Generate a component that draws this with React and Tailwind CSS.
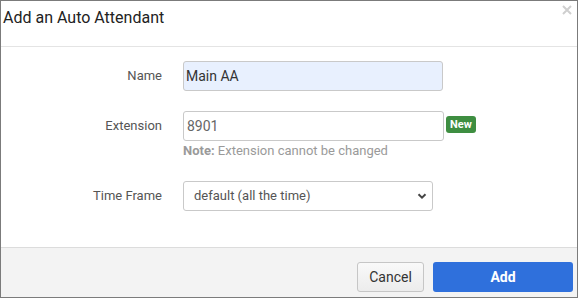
import React from "react";

const Label = ({ children }) => (
  <div className="text-right text-[13px] text-[#555] leading-[30px]">{children}</div>
);

const App = () => {
  return (
    <div
      className="w-[578px] h-[298px] border border-[#7b7b7b] bg-white flex flex-col overflow-hidden"
      style={{ fontFamily: "Roboto, 'Liberation Sans', sans-serif" }}
    >
      {/* header */}
      <div className="h-[46px] border-b border-[#e4e4e4] flex items-start justify-between pl-[2px] pr-[5px] pt-[7px]">
        <h3 className="text-[16px] leading-[20px] text-[#222]">Add an Auto Attendant</h3>
        <svg width="10" height="10" viewBox="0 0 10 10" className="mt-[-3px]">
          <path d="M1 1 L9 9 M9 1 L1 9" stroke="#cfcfcf" strokeWidth="2" />
        </svg>
      </div>

      {/* body */}
      <div className="flex-1 pt-[14px]">
        <div className="grid grid-cols-[161px_1fr] gap-x-[21px] items-start">
          <Label>Name</Label>
          <div className="w-[260px] h-[30px] border border-[#c9c9c9] rounded-[3px] bg-[#e8f0fe] text-[14px] text-[#333] leading-[28px] pl-[2px]">
            Main AA
          </div>

          <div className="mt-[20px]">
            <Label>Extension</Label>
          </div>
          <div className="mt-[20px]">
            <div className="flex items-center gap-[2px]">
              <div className="w-[261px] h-[30px] border border-[#c9c9c9] rounded-[3px] bg-white text-[14px] text-[#666] leading-[28px] pl-[3px]">
                8901
              </div>
              <span className="bg-[#3e8e41] text-white text-[11px] font-bold leading-[17px] px-[4px] rounded-[3px] -mt-[3px]">
                New
              </span>
            </div>
            <p className="mt-[2px] text-[13px] leading-[16px] text-[#9a9a9a]">
              <b className="font-bold">Note:</b> Extension cannot be changed
            </p>
          </div>

          <div className="mt-[22px]">
            <Label>Time Frame</Label>
          </div>
          <div className="mt-[22px]">
            <div className="w-[250px] h-[30px] border border-[#c9c9c9] rounded-[3px] bg-white flex items-center justify-between pl-[10px] pr-[5px]">
              <span className="text-[13px] text-[#555]">default (all the time)</span>
              <svg width="10" height="10" viewBox="0 0 10 10">
                <path d="M1.5 3.2 L5 6.6 L8.5 3.2" fill="none" stroke="#444" strokeWidth="2" />
              </svg>
            </div>
          </div>
        </div>
      </div>

      {/* footer */}
      <div className="h-[50px] border-t border-[#dcdcdc] bg-[#f3f3f3] flex justify-end items-start gap-[9px] pt-[14px] pr-[4px]">
        <button className="w-[67px] h-[30px] rounded-[3px] border border-[#c6c6c6] bg-gradient-to-b from-[#f9f9f9] to-[#ececec] text-[14px] text-[#333]">
          Cancel
        </button>
        <button className="w-[140px] h-[30px] rounded-[3px] bg-[#2f70dc] text-[14px] font-bold text-white">
          Add
        </button>
      </div>
    </div>
  );
};

export default App;
